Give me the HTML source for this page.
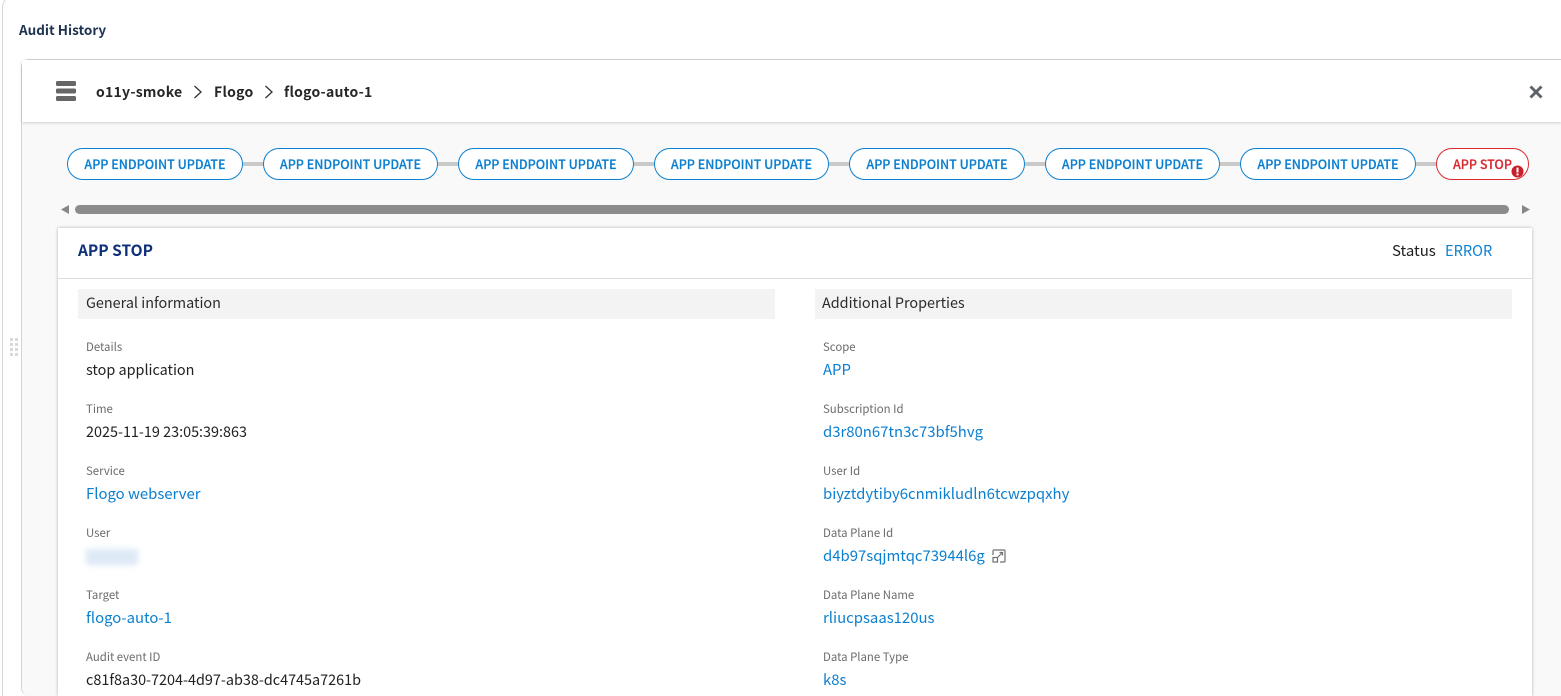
<!DOCTYPE html>
<html lang="en">
<head>
<meta charset="utf-8">
<title>Audit History</title>
<style>
html,body{margin:0;padding:0;background:#fff;width:1561px;height:696px;overflow:hidden;}
body{position:relative;font-family:"Noto Sans CJK JP","Liberation Sans",sans-serif;color:#212121;}
#root{position:absolute;left:0;top:0;width:1561px;height:696px;overflow:hidden;}
.abs,.l,.v,.pill,.c{position:absolute;}
.t{position:absolute;white-space:nowrap;line-height:20px;}
.outer{left:2px;top:-3px;width:1559px;height:699px;border-left:1px solid #d6d6d6;border-top:1px solid #e4e4e4;border-radius:10px 0 0 0;box-sizing:border-box;}
.panel{left:21px;top:59px;width:1540px;height:637px;border:1px solid #d4d4d4;border-width:1px 0 0 1px;border-radius:8px 0 0 8px;box-sizing:border-box;background:#f9f9f9;overflow:hidden;}
.phead{left:22px;top:60px;width:1539px;height:62px;background:#fff;box-shadow:0 1px 3px rgba(0,0,0,.18);}
.pill{top:148px;height:32px;box-sizing:border-box;border:1px solid #0b7fd0;border-radius:16px;background:#fff;color:#0b7fd0;font-size:12.5px;font-weight:500;text-align:center;line-height:30px;white-space:nowrap;-webkit-text-stroke:.2px currentColor;}
.c{top:162px;height:4px;background:#c9c9c9;}
.card{left:58px;top:228px;width:1474px;height:468px;background:#fff;box-shadow:0 0 3px rgba(0,0,0,.3);}
.sec{top:289px;height:30px;width:697px;background:#f3f3f3;}
.l{white-space:nowrap;font-size:11.4px;line-height:16px;color:#6b6b6b;}
.v{white-space:nowrap;font-size:14.4px;line-height:20px;color:#212121;}
.b{color:#0b7fd0;font-size:14.9px;}
.bc{font-size:14px;font-weight:700;letter-spacing:.25px;top:82px;color:#262626;}
</style>
</head>
<body>
<div id="root">
<div class="abs outer"></div>
<div class="t" style="left:19px;top:19px;font-size:13.5px;font-weight:700;color:#1f3350;">Audit History</div>

<div class="abs panel"></div>
<div class="abs phead"></div>

<svg class="abs" style="left:56px;top:81px;" width="21" height="21" viewBox="0 0 21 21">
<rect x="0" y="0" width="20" height="5" rx="1.5" fill="#666"/>
<rect x="0" y="7.5" width="20" height="5" rx="1.5" fill="#666"/>
<rect x="0" y="15" width="20" height="5" rx="1.5" fill="#666"/>
</svg>
<div class="t bc" style="left:96px;">o11y-smoke</div>
<svg class="abs" style="left:192px;top:85px;" width="12" height="14" viewBox="0 0 12 14"><path d="M2.5 1 L9 7 L2.5 13" fill="none" stroke="#333" stroke-width="1.3"/></svg>
<div class="t bc" style="left:214px;">Flogo</div>
<svg class="abs" style="left:263px;top:85px;" width="12" height="14" viewBox="0 0 12 14"><path d="M2.5 1 L9 7 L2.5 13" fill="none" stroke="#333" stroke-width="1.3"/></svg>
<div class="t bc" style="left:284px;">flogo-auto-1</div>
<svg class="abs" style="left:1529px;top:85px;" width="14" height="14" viewBox="0 0 14 14"><path d="M1.5 1.5 L12.5 12.5 M12.5 1.5 L1.5 12.5" fill="none" stroke="#5f6368" stroke-width="3"/></svg>

<div class="c" style="left:243px;width:21px;"></div>
<div class="c" style="left:438px;width:21px;"></div>
<div class="c" style="left:634px;width:21px;"></div>
<div class="c" style="left:829px;width:21px;"></div>
<div class="c" style="left:1025px;width:21px;"></div>
<div class="c" style="left:1220px;width:21px;"></div>
<div class="c" style="left:1416px;width:21px;"></div>

<div class="pill" style="left:67px;width:176px;">APP ENDPOINT UPDATE</div>
<div class="pill" style="left:263px;width:175px;">APP ENDPOINT UPDATE</div>
<div class="pill" style="left:458px;width:176px;">APP ENDPOINT UPDATE</div>
<div class="pill" style="left:654px;width:175px;">APP ENDPOINT UPDATE</div>
<div class="pill" style="left:849px;width:176px;">APP ENDPOINT UPDATE</div>
<div class="pill" style="left:1045px;width:175px;">APP ENDPOINT UPDATE</div>
<div class="pill" style="left:1240px;width:176px;">APP ENDPOINT UPDATE</div>
<div class="pill" style="left:1436px;width:93px;border-color:#d9282f;color:#d9282f;">APP STOP</div>
<svg class="abs" style="left:1511px;top:165px;" width="13" height="13" viewBox="0 0 13 13"><circle cx="6.5" cy="6.5" r="6" fill="#c8202b"/><rect x="5.5" y="2.6" width="2" height="4.8" fill="#fff"/><rect x="5.5" y="8.4" width="2" height="2" fill="#fff"/></svg>

<svg class="abs" style="left:60px;top:204px;" width="10" height="11" viewBox="0 0 10 11"><path d="M9 1 V10 L1 5.5 Z" fill="#888"/></svg>
<div class="abs" style="left:75px;top:205px;width:1434px;height:9px;border-radius:5px;background:#8c8c8c;"></div>
<svg class="abs" style="left:1521px;top:204px;" width="10" height="11" viewBox="0 0 10 11"><path d="M1 1 V10 L9 5.5 Z" fill="#888"/></svg>

<svg class="abs" style="left:9px;top:338px;" width="11" height="19" viewBox="0 0 11 19" fill="#d9d9d9">
<rect x="1" y="0" width="3" height="3"/><rect x="6" y="0" width="3" height="3"/>
<rect x="1" y="5" width="3" height="3"/><rect x="6" y="5" width="3" height="3"/>
<rect x="1" y="10" width="3" height="3"/><rect x="6" y="10" width="3" height="3"/>
<rect x="1" y="15" width="3" height="3"/><rect x="6" y="15" width="3" height="3"/>
</svg>

<div class="abs card"></div>
<div class="t" style="left:78px;top:239.5px;font-size:15.5px;font-weight:700;color:#0e2f7a;">APP STOP</div>
<div class="t" style="left:1392px;top:241px;font-size:15px;">Status</div>
<div class="t" style="left:1445px;top:241px;font-size:14.6px;color:#0b7fd0;">ERROR</div>
<div class="abs" style="left:58px;top:278px;width:1474px;height:1px;background:#dcdcdc;"></div>

<div class="abs sec" style="left:78px;"></div>
<div class="abs sec" style="left:815px;"></div>
<div class="t" style="left:86px;top:293px;font-size:14.4px;color:#2b2b2b;">General information</div>
<div class="t" style="left:822px;top:293px;font-size:14.4px;color:#2b2b2b;">Additional Properties</div>

<div class="l" style="left:86px;top:339px;">Details</div>
<div class="v" style="left:86px;top:360px;">stop application</div>
<div class="l" style="left:86px;top:401px;">Time</div>
<div class="v" style="left:86px;top:422px;">2025-11-19 23:05:39:863</div>
<div class="l" style="left:86px;top:463px;">Service</div>
<div class="v b" style="left:86px;top:484px;">Flogo webserver</div>
<div class="l" style="left:86px;top:525px;">User</div>
<div class="abs" style="left:86px;top:549px;width:52px;height:16px;background:#dde9f5;filter:blur(3px);"></div>
<div class="l" style="left:86px;top:587px;">Target</div>
<div class="v b" style="left:86px;top:608px;">flogo-auto-1</div>
<div class="l" style="left:86px;top:649px;">Audit event ID</div>
<div class="v" style="left:86px;top:670px;">c81f8a30-7204-4d97-ab38-dc4745a7261b</div>

<div class="l" style="left:823px;top:339px;">Scope</div>
<div class="v b" style="left:823px;top:360px;">APP</div>
<div class="l" style="left:823px;top:401px;">Subscription Id</div>
<div class="v b" style="left:823px;top:422px;">d3r80n67tn3c73bf5hvg</div>
<div class="l" style="left:823px;top:463px;">User Id</div>
<div class="v b" style="left:823px;top:484px;">biyztdytiby6cnmikludln6tcwzpqxhy</div>
<div class="l" style="left:823px;top:525px;">Data Plane Id</div>
<div class="v b" style="left:823px;top:546px;">d4b97sqjmtqc73944l6g</div>
<svg class="abs" style="left:992px;top:549px;" width="14" height="14" viewBox="0 0 14 14" fill="none" stroke="#6f6f6f" stroke-width="1.2">
<path d="M1 6 V2 A1 1 0 0 1 2 1 H12 A1 1 0 0 1 13 2 V12 A1 1 0 0 1 12 13 H8"/>
<rect x="1" y="8.5" width="4.5" height="4.5"/>
<path d="M6 8 L10.5 3.5 M7.5 3.5 H10.5 V6.5"/>
</svg>
<div class="l" style="left:823px;top:587px;">Data Plane Name</div>
<div class="v b" style="left:823px;top:608px;">rliucpsaas120us</div>
<div class="l" style="left:823px;top:649px;">Data Plane Type</div>
<div class="v b" style="left:823px;top:670px;">k8s</div>
</div>
</body>
</html>
